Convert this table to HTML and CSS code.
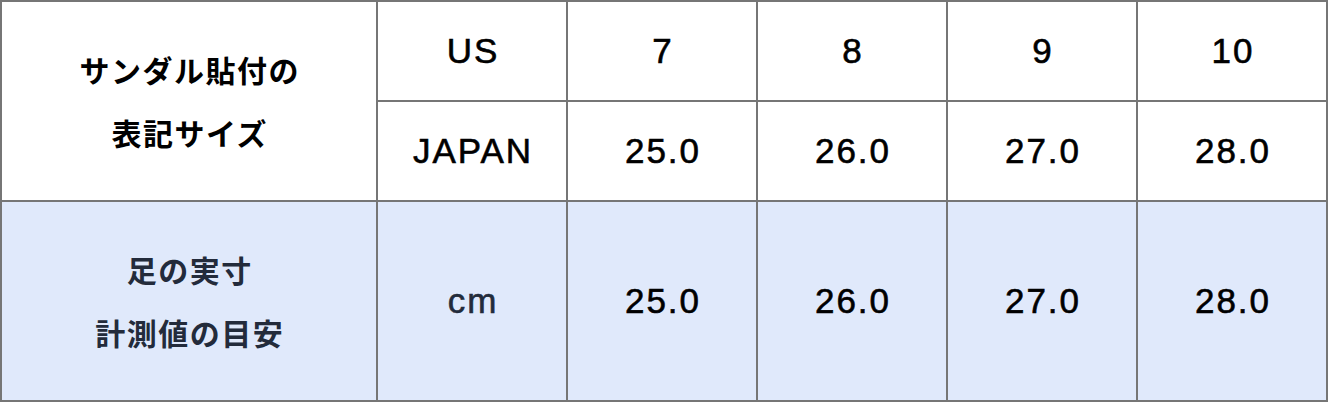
FILE: index.html
```html
<!DOCTYPE html>
<html lang="ja">
<head>
<meta charset="utf-8">
<link rel="stylesheet" href="styles.css">
</head>
<body>
<div class="size-table">
  <div class="cell head span2"><span>サンダル貼付の</span><span>表記サイズ</span></div>
  <div class="cell num">US</div>
  <div class="cell num">7</div>
  <div class="cell num">8</div>
  <div class="cell num">9</div>
  <div class="cell num">10</div>
  <div class="cell num">JAPAN</div>
  <div class="cell num">25.0</div>
  <div class="cell num">26.0</div>
  <div class="cell num">27.0</div>
  <div class="cell num">28.0</div>
  <div class="cell head blue navy"><span>足の実寸</span><span>計測値の目安</span></div>
  <div class="cell num blue navy">cm</div>
  <div class="cell num blue">25.0</div>
  <div class="cell num blue">26.0</div>
  <div class="cell num blue">27.0</div>
  <div class="cell num blue">28.0</div>
</div>
</body>
</html>
```
FILE: styles.css
```css
html, body {
  margin: 0;
  padding: 0;
  background: #ffffff;
}
.size-table {
  display: grid;
  grid-template-columns: 374px repeat(5, 188px);
  grid-template-rows: 98px 98px 198px;
  gap: 2px;
  padding: 2px;
  background: #767676;
  width: 1328px;
  height: 402px;
  box-sizing: border-box;
}
.cell {
  background: #ffffff;
  display: flex;
  flex-direction: column;
  align-items: center;
  justify-content: center;
  color: #000000;
}
.span2 {
  grid-row: span 2;
}
.head {
  font-family: "Noto Sans CJK JP", sans-serif;
  font-weight: 700;
  font-size: 30px;
  letter-spacing: 1.5px;
  line-height: 63px;
  padding-left: 1.5px;
}
.num {
  font-family: "Liberation Sans", Arial, sans-serif;
  font-size: 35px;
  font-weight: 400;
  letter-spacing: 2px;
  padding-left: 2px;
  -webkit-text-stroke: 0.6px currentColor;
}
.blue {
  background: #e0e9fb;
}
.navy {
  color: #232b3b;
}
```
